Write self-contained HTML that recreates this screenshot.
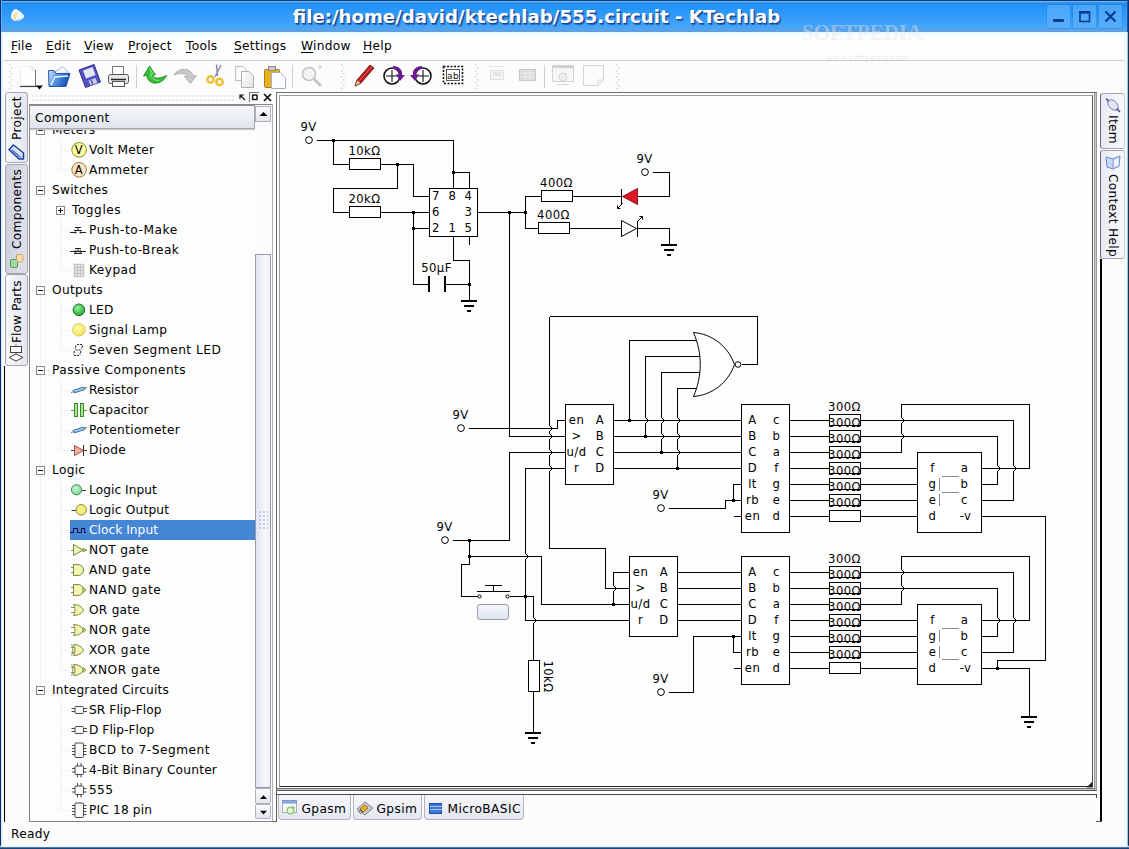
<!DOCTYPE html><html><head><meta charset="utf-8"><title>KTechlab</title><style>
html,body{margin:0;padding:0}
body{width:1129px;height:849px;overflow:hidden;position:relative;background:#fcfcfc;font-family:"DejaVu Sans","Liberation Sans",sans-serif;font-size:12.2px;letter-spacing:0.3px;color:#000}
div,span{position:absolute;box-sizing:border-box;white-space:nowrap}
#title{left:0;top:0;width:1129px;height:32px;background:linear-gradient(#0a3a78 0,#0a3a78 0.9px,#6cb4f8 1.4px,#4a98ea 2.3px,#2888e8 3.2px,#2092f8 5.5px,#2c98f8 12px,#369cfa 18px,#3ea4fc 25px,#52a4ee 29px,#5aa2e6 31px,#6a9cd0 32px)}
#ttext{left:0;width:1073px;letter-spacing:0;top:6px;text-align:center;color:#fff;font-weight:bold;font-size:18.15px;line-height:22px;text-shadow:1px 1px 0 #1c428e,1.5px 2px 1px rgba(20,50,120,.55)}
.wb{top:5px;width:23px;height:23px;background:linear-gradient(#4aa6fa,#58aefc);border-radius:2px;box-shadow:0 0 0 1px rgba(40,120,220,.35)}
#menubar{left:1px;top:32px;width:1127px;height:28px;background:linear-gradient(#e2fbff 0,#f4feff 3px,#fdfefe 7px,#fdfdfd 28px)}
#menubar span{top:6px;line-height:16px;font-size:12.2px;letter-spacing:0.3px}
#menubar u{text-decoration:underline;text-underline-offset:2px}
#mline{left:2px;top:60px;width:1125px;height:1px;background:#d0d0d0}
#bl{left:0;top:32px;width:4px;height:817px;background:linear-gradient(90deg,#0e2c66 0,#0e2c66 0.9px,#d4e8fa 1.3px,#eaf4fd 2px,rgba(240,248,254,0) 4px)}
#br{left:1122px;top:32px;width:7px;height:817px;background:linear-gradient(90deg,rgba(232,250,255,0) 0,#e6fbff 4.5px,#e0f6fc 5.3px,#16304e 6.1px,#16304e 7px)}
#br2{left:1127px;top:0;width:2px;height:32px;background:linear-gradient(90deg,#2a7ad8,#0e3476 1px)}
#bl2{left:0;top:0;width:2px;height:32px;background:linear-gradient(90deg,#0a2e6c 0,#0a2e6c 1px,#62b0fa 1px,#62b0fa 2px)}
#bb{left:0;top:845px;width:1129px;height:4px;background:linear-gradient(rgba(240,248,255,0) 0,#e4f2fc 2px,#1c4a84 2.7px,#163e78 4px)}
.vtab{border:1px solid #a4a4ac;border-radius:3px;background:linear-gradient(90deg,#f6f7fa,#e4e7f0)}
.vtxt{font-size:12.2px;letter-spacing:0.3px;line-height:16px;transform-origin:0 0}
.btab{top:795px;height:25px;border:1px solid #b4b4bc;border-top:none;border-radius:0 0 4px 4px;background:linear-gradient(#f6f7fb,#e4e7f0)}
.btab span{top:5.5px;line-height:16px;font-size:12.2px;letter-spacing:0.4px}
</style></head><body>
<div id="title"><div id="ttext">file:/home/david/ktechlab/555.circuit - KTechlab</div>
<svg style="position:absolute;left:9px;top:7px" width="18" height="16" viewBox="9 7 18 16"><path d="M11 17.500C10.500 14 13 9.500 15.500 9C18 9.500 23 13.500 24 16C24.500 18 21 20 17 20.500C14 21 11.500 20 11 17.500Z" fill="#eef4fb"/><path d="M13.500 19.500L15 12.500M15 20L16.500 13" stroke="#f0dc70" stroke-width="1.100" fill="none"/><path d="M16 10C19 11.500 22 14 23.500 16" stroke="#ffffff" stroke-width="1.200" fill="none"/><path d="M13 20.500C16 21.500 21 20.500 23.500 18" stroke="#b8c8e0" stroke-width="0.800" fill="none"/></svg>
<div class="wb" style="left:1047px"><svg style="position:absolute;left:0;top:0" width="23" height="23"><rect x="6" y="14" width="11" height="3" rx="1" fill="#0b3c8e"/></svg></div>
<div class="wb" style="left:1073px"><svg style="position:absolute;left:0;top:0" width="23" height="23"><rect x="7" y="7.5" width="9.5" height="9" fill="none" stroke="#0b3c8e" stroke-width="1.6"/><rect x="6.2" y="6" width="11.1" height="2.4" fill="#0b3c8e"/></svg></div>
<div class="wb" style="left:1099px"><svg style="position:absolute;left:0;top:0" width="23" height="23"><path d="M6.5 6.5L16.5 16.5M16.5 6.5L6.5 16.5" stroke="#0b3c8e" stroke-width="2.2" fill="none"/></svg></div>
</div>
<div id="menubar">
<span style="left:10px"><u>F</u>ile</span>
<span style="left:45px"><u>E</u>dit</span>
<span style="left:83px"><u>V</u>iew</span>
<span style="left:127px"><u>P</u>roject</span>
<span style="left:185px"><u>T</u>ools</span>
<span style="left:233px"><u>S</u>ettings</span>
<span style="left:300px"><u>W</u>indow</span>
<span style="left:362px"><u>H</u>elp</span>
</div><div id="mline"></div>
<div style="left:802px;top:20px;font-family:'Liberation Serif',serif;font-weight:bold;font-size:21px;letter-spacing:0;line-height:24px;color:rgba(255,255,255,.36);text-shadow:0 1px 1px rgba(150,90,90,.10)">SOFTPEDIA</div>
<div style="left:826px;top:53px;font-size:8.500px;letter-spacing:0;line-height:10px;color:rgba(0,0,0,.10)">www.softpedia.com</div>
<svg style="position:absolute;left:0;top:61px" width="1129" height="31" viewBox="0 61 1129 31">
<defs><linearGradient id="gpage" x1="0" y1="0" x2="1" y2="1"><stop offset="0" stop-color="#ffffff"/><stop offset="1" stop-color="#e4e4e4"/></linearGradient></defs>
<rect x="9" y="64" width="1.5" height="1.5" fill="#d4d4d8"/><rect x="11" y="67" width="1.5" height="1.5" fill="#d4d4d8"/><rect x="9" y="70" width="1.5" height="1.5" fill="#d4d4d8"/><rect x="11" y="73" width="1.5" height="1.5" fill="#d4d4d8"/><rect x="9" y="76" width="1.5" height="1.5" fill="#d4d4d8"/><rect x="11" y="79" width="1.5" height="1.5" fill="#d4d4d8"/><rect x="9" y="82" width="1.5" height="1.5" fill="#d4d4d8"/><rect x="11" y="85" width="1.5" height="1.5" fill="#d4d4d8"/><rect x="9" y="88" width="1.5" height="1.5" fill="#d4d4d8"/>
<rect x="341" y="64" width="1.5" height="1.5" fill="#d4d4d8"/><rect x="343" y="67" width="1.5" height="1.5" fill="#d4d4d8"/><rect x="341" y="70" width="1.5" height="1.5" fill="#d4d4d8"/><rect x="343" y="73" width="1.5" height="1.5" fill="#d4d4d8"/><rect x="341" y="76" width="1.5" height="1.5" fill="#d4d4d8"/><rect x="343" y="79" width="1.5" height="1.5" fill="#d4d4d8"/><rect x="341" y="82" width="1.5" height="1.5" fill="#d4d4d8"/><rect x="343" y="85" width="1.5" height="1.5" fill="#d4d4d8"/><rect x="341" y="88" width="1.5" height="1.5" fill="#d4d4d8"/>
<rect x="475" y="64" width="1.5" height="1.5" fill="#d4d4d8"/><rect x="477" y="67" width="1.5" height="1.5" fill="#d4d4d8"/><rect x="475" y="70" width="1.5" height="1.5" fill="#d4d4d8"/><rect x="477" y="73" width="1.5" height="1.5" fill="#d4d4d8"/><rect x="475" y="76" width="1.5" height="1.5" fill="#d4d4d8"/><rect x="477" y="79" width="1.5" height="1.5" fill="#d4d4d8"/><rect x="475" y="82" width="1.5" height="1.5" fill="#d4d4d8"/><rect x="477" y="85" width="1.5" height="1.5" fill="#d4d4d8"/><rect x="475" y="88" width="1.5" height="1.5" fill="#d4d4d8"/>
<rect x="616" y="64" width="1.5" height="1.5" fill="#d4d4d8"/><rect x="618" y="67" width="1.5" height="1.5" fill="#d4d4d8"/><rect x="616" y="70" width="1.5" height="1.5" fill="#d4d4d8"/><rect x="618" y="73" width="1.5" height="1.5" fill="#d4d4d8"/><rect x="616" y="76" width="1.5" height="1.5" fill="#d4d4d8"/><rect x="618" y="79" width="1.5" height="1.5" fill="#d4d4d8"/><rect x="616" y="82" width="1.5" height="1.5" fill="#d4d4d8"/><rect x="618" y="85" width="1.5" height="1.5" fill="#d4d4d8"/><rect x="616" y="88" width="1.5" height="1.5" fill="#d4d4d8"/>
<path d="M136.5 65V88" stroke="#d0d0d0"/>
<path d="M292.5 65V88" stroke="#d0d0d0"/>
<path d="M544.5 65V88" stroke="#d0d0d0"/>
<path d="M20.5 66.5H32L35.5 70V85.5H20.5Z" fill="#fefefe" stroke="#ececec"/><path d="M32 66.5V70H35.5" fill="none" stroke="#dcdcdc"/><path d="M35.5 70V86" stroke="#777"/><path d="M20 86.5H37" stroke="#444" stroke-width="1.2"/><path d="M36 85.5L43 85.5L39.5 89.5Z" fill="#000"/>
<defs><linearGradient id="gfold" x1="0" y1="0" x2="1" y2="0.3"><stop offset="0" stop-color="#d8e8fa"/><stop offset="0.45" stop-color="#5a98e4"/><stop offset="1" stop-color="#1450b8"/></linearGradient></defs><path d="M52 74L63 66.5L69 73Z" fill="#f4f8fc" stroke="#a8b8d0"/><path d="M48.5 70.5L49 86.5L66 86.5L70 73.5L56 73.5L54 70.5Z" fill="url(#gfold)" stroke="#2458a8"/><path d="M51 85L55 77L68 76" stroke="#eaf2fc" fill="none" stroke-width="1.4"/>
<path d="M79 70L94 64.5L100.5 82L85.5 87.5Z" fill="#5252c0" stroke="#30308a"/><path d="M83 70.5L92.5 67L95.5 75L86 78.5Z" fill="#e4e8f6"/><path d="M88.5 80.5L95.5 78L97.5 83L90.5 85.5Z" fill="#c4c8e4"/><path d="M91 80L93 85" stroke="#5252c0" stroke-width="1.5"/>
<rect x="112.5" y="66.5" width="11" height="8" fill="#fff" stroke="#777"/><rect x="108.500" y="74.5" width="20" height="9" rx="2" fill="#e8e8e8" stroke="#555"/><rect x="112.500" y="81.5" width="12" height="5" fill="#fff" stroke="#555"/><path d="M111 79.500H126" stroke="#222" stroke-width="1.5"/>
<path d="M149.5 66L155.5 75L152.5 75C153 78 157 80 166.5 75.5C164 82 156 85 151 82C148 80.5 147 78 147 75.5L143.5 76Z" fill="#34c034" stroke="#1a7a1a" stroke-width="0.8"/><path d="M149.5 68.5L153 74L150.5 74C151 78 154 80.5 159 80.5" fill="none" stroke="#8af08a" stroke-width="1"/>
<path d="M190.5 83.5L184.5 76.5L187.5 76.5C186 73.5 181 72.5 174 75C177 69.5 185 68 189 70.5C191.5 72 192.5 74 193 76L196.5 75.5Z" fill="#c8c8c8" stroke="#a4a4a4" stroke-width="0.8"/>
<path d="M216.5 64.5L217.5 76M221 65L215 77" stroke="#8a8ab0" stroke-width="1.5" fill="none"/><circle cx="210.5" cy="79.5" r="3.2" fill="none" stroke="#ecc030" stroke-width="2.4"/><circle cx="219.5" cy="82" r="3.2" fill="none" stroke="#ecc030" stroke-width="2.4"/>
<path d="M235.500 66.500H243L246.500 70V80.500H235.500Z" fill="#fafafa" stroke="#c0c0c0"/><path d="M241.500 71.500H249L253.500 76V87.500H241.500Z" fill="url(#gpage)" stroke="#b0b0b0"/>
<rect x="264.500" y="69.500" width="15" height="18" rx="1" fill="#e8b020" stroke="#b08010"/><rect x="268.500" y="66.500" width="7" height="4" fill="#c8c8c8" stroke="#888"/><path d="M271.500 72.500H280L285.500 78V88.500H271.500Z" fill="#fafcff" stroke="#a8b0c0"/>
<circle cx="309" cy="74" r="6.500" fill="#f4f4f4" stroke="#c4c4c4" stroke-width="1.6"/><path d="M314 79L321 86" stroke="#c4c4c4" stroke-width="3"/><path d="M318 67H322M320 65V69" stroke="#d0d0d0"/>
<path d="M355 86L357 80L370 65L374 68L361 83Z" fill="#b81c1c" stroke="#6a0c0c" stroke-width="0.8"/><path d="M355 86L357 80L361 83Z" fill="#f0d0a0" stroke="#7a1010" stroke-width="0.6"/><path d="M359 81L372 66.500" stroke="#f06060"/>
<circle cx="392" cy="76" r="8" fill="#fff" stroke="#111" stroke-width="1.6"/><path d="M392 70V82M386 76H398" stroke="#111" stroke-width="1.1"/><path d="M393 66C399 66 403 70 402 75L405 75L400 81L396 74L399 74.500C399 71 396 69 393 69Z" fill="#6a1a8a"/>
<circle cx="423" cy="76" r="8" fill="#fff" stroke="#111" stroke-width="1.6"/><path d="M423 70V82M417 76H429" stroke="#111" stroke-width="1.1"/><path d="M422 66C416 66 412 70 413 75L410 75L415 81L419 74L416 74.500C416 71 419 69 422 69Z" fill="#6a1a8a"/>
<rect x="443.500" y="66.500" width="19" height="17" fill="#fff" stroke="#111" stroke-dasharray="2 1.5" stroke-width="1.6"/><rect x="446.500" y="69.500" width="13" height="11" fill="#fff" stroke="#333" stroke-width="0.8"/><text x="453" y="79" font-size="9" text-anchor="middle" font-family="DejaVu Sans,Liberation Sans,sans-serif" fill="#111">ab</text>
<rect x="490.500" y="70.500" width="13" height="9" fill="#f4f4f4" stroke="#e0e0e0"/><path d="M489 66.500H505" stroke="#e4e4e4"/><rect x="493" y="72" width="8" height="4" fill="#e6e6e6"/>
<rect x="519.500" y="69.500" width="16" height="11" fill="#dcdcdc" stroke="#c8c8c8"/><path d="M520 73H535M520 77H535M525 70V80M530 70V80" stroke="#eee"/>
<rect x="552.500" y="65.500" width="21" height="16" fill="#f6f6f6" stroke="#d4d4d4"/><path d="M553 67H573" stroke="#d0d0d0" stroke-width="2"/><circle cx="563" cy="77" r="4" fill="#ececec" stroke="#d8d8d8"/><path d="M557 84.500H569" stroke="#d8d8d8"/>
<path d="M583.500 65.500H603.500V80L598 85.500H583.500Z" fill="#fbfbfb" stroke="#d4d4d4"/><path d="M603.500 80H598V85.500" fill="none" stroke="#d8d8d8"/>
</svg>
<div class="vtab" style="left:5px;top:92px;width:23px;height:71px;"></div>
<div class="vtxt" style="left:8.5px;top:140px;letter-spacing:0.3px;transform:rotate(-90deg)">Project</div>
<div class="vtab" style="left:5px;top:164px;width:23px;height:110px;background:linear-gradient(90deg,#cdd1de,#dfe2ec);"></div>
<div class="vtxt" style="left:8.5px;top:249px;letter-spacing:0.3px;transform:rotate(-90deg)">Components</div>
<div class="vtab" style="left:5px;top:274px;width:23px;height:92px;"></div>
<div class="vtxt" style="left:8.5px;top:342.5px;letter-spacing:0.05px;transform:rotate(-90deg)">Flow Parts</div>
<svg style="position:absolute;left:6px;top:142px" width="20" height="20" viewBox="0 0 20 20"><path d="M3 7.500L7.500 3L17.500 11V17H13Z" fill="#cfdcf6" stroke="#1c3c9c" stroke-width="1.5" stroke-linejoin="round"/><path d="M6 8L14.500 15.500" stroke="#4a6ac8" stroke-width="1.2" fill="none"/><path d="M8.500 5.500L16 12" stroke="#ffffff" stroke-width="1" fill="none"/></svg>
<svg style="position:absolute;left:7px;top:251px" width="20" height="20" viewBox="0 0 20 20"><rect x="3.500" y="8.500" width="7" height="8" rx="1.500" fill="#a0dca0" stroke="#5a9a5a"/><rect x="9.500" y="3.500" width="6.500" height="7.500" rx="1.500" fill="#f6dcae" stroke="#c8a464"/></svg>
<svg style="position:absolute;left:6px;top:344px" width="20" height="19" viewBox="0 0 20 19"><path d="M10 0.500V2.500M10 8.500V10" stroke="#555"/><rect x="4.500" y="2.500" width="11" height="6" fill="#fff" stroke="#444"/><path d="M10 10L17 13.500L10 17L3 13.500Z" fill="#fff" stroke="#444"/></svg>
<div style="left:30px;top:93px;width:243px;height:10px;background-image:radial-gradient(circle,#e2e2e6 0.8px,transparent 1.1px);background-size:4px 4px;background-position:1px 1px;opacity:.8"></div>
<div style="left:234px;top:92px;width:40px;height:11px;background:#fcfcfc"></div>
<svg style="position:absolute;left:234px;top:90px" width="40" height="14" viewBox="0 0 40 14"><path d="M6 5L11 10M6 9V5H10" stroke="#111" stroke-width="1.2" fill="none"/><path d="M15.5 12V2.5H25" stroke="#777" fill="none"/><rect x="18.6" y="5.1" width="4.4" height="4.4" fill="none" stroke="#111" stroke-width="1.4"/><path d="M30 4L37 11M37 4L30 11" stroke="#111" stroke-width="1.7" fill="none"/></svg>
<div style="left:29px;top:104px;width:244px;height:718px;border:1px solid #858585;border-right-color:#b0b0b0;background:#fdfdfd"></div>
<div style="left:31px;top:105px;width:224px;height:716px;overflow:hidden">
<div style="left:39px;top:415px;width:185px;height:20px;background:#4585d5"></div>
<svg style="position:absolute;left:0;top:0" width="224" height="716" viewBox="31 104 224 716">
<g stroke="#f0f0f0" stroke-width="1" fill="none" shape-rendering="crispEdges">
<path d="M40.5 130V689"/>
<path d="M60.5 137V169"/>
<path d="M60.5 149.5H69"/>
<path d="M60.5 169.5H69"/>
<path d="M46 129.5H51"/>
<path d="M60.5 197V269"/>
<path d="M60.5 209.5H69"/>
<path d="M60.5 229.5H69"/>
<path d="M60.5 249.5H69"/>
<path d="M60.5 269.5H69"/>
<path d="M46 189.5H51"/>
<path d="M60.5 297V349"/>
<path d="M60.5 309.5H69"/>
<path d="M60.5 329.5H69"/>
<path d="M60.5 349.5H69"/>
<path d="M46 289.5H51"/>
<path d="M60.5 377V449"/>
<path d="M60.5 389.5H69"/>
<path d="M60.5 409.5H69"/>
<path d="M60.5 429.5H69"/>
<path d="M60.5 449.5H69"/>
<path d="M46 369.5H51"/>
<path d="M60.5 477V669"/>
<path d="M60.5 489.5H69"/>
<path d="M60.5 509.5H69"/>
<path d="M60.5 529.5H69"/>
<path d="M60.5 549.5H69"/>
<path d="M60.5 569.5H69"/>
<path d="M60.5 589.5H69"/>
<path d="M60.5 609.5H69"/>
<path d="M60.5 629.5H69"/>
<path d="M60.5 649.5H69"/>
<path d="M60.5 669.5H69"/>
<path d="M46 469.5H51"/>
<path d="M60.5 697V809"/>
<path d="M60.5 709.5H69"/>
<path d="M60.5 729.5H69"/>
<path d="M60.5 749.5H69"/>
<path d="M60.5 769.5H69"/>
<path d="M60.5 789.5H69"/>
<path d="M60.5 809.5H69"/>
<path d="M46 689.5H51"/>
</g>
<rect x="36.5" y="125.5" width="8" height="8" fill="#fff" stroke="#8a8a8a" shape-rendering="crispEdges"/>
<path d="M38 129.5H43" stroke="#111" shape-rendering="crispEdges"/>
<rect x="36.5" y="185.5" width="8" height="8" fill="#fff" stroke="#8a8a8a" shape-rendering="crispEdges"/>
<path d="M38 189.5H43" stroke="#111" shape-rendering="crispEdges"/>
<rect x="56.5" y="205.5" width="8" height="8" fill="#fff" stroke="#8a8a8a" shape-rendering="crispEdges"/>
<path d="M58 209.5H63M60.5 207V212" stroke="#111" shape-rendering="crispEdges"/>
<rect x="36.5" y="285.5" width="8" height="8" fill="#fff" stroke="#8a8a8a" shape-rendering="crispEdges"/>
<path d="M38 289.5H43" stroke="#111" shape-rendering="crispEdges"/>
<rect x="36.5" y="365.5" width="8" height="8" fill="#fff" stroke="#8a8a8a" shape-rendering="crispEdges"/>
<path d="M38 369.5H43" stroke="#111" shape-rendering="crispEdges"/>
<rect x="36.5" y="465.5" width="8" height="8" fill="#fff" stroke="#8a8a8a" shape-rendering="crispEdges"/>
<path d="M38 469.5H43" stroke="#111" shape-rendering="crispEdges"/>
<rect x="36.5" y="685.5" width="8" height="8" fill="#fff" stroke="#8a8a8a" shape-rendering="crispEdges"/>
<path d="M38 689.5H43" stroke="#111" shape-rendering="crispEdges"/>
</svg>
<span style="left:21px;top:17px;line-height:16px;font-size:12.2px;letter-spacing:0.3px;color:#000">Meters</span>
<span style="left:58px;top:37px;line-height:16px;font-size:12.2px;letter-spacing:0.31px;color:#000">Volt Meter</span>
<svg style="position:absolute;left:39px;top:37px;overflow:visible" width="17" height="16" viewBox="0 0 17 16"><circle cx="9.1" cy="7.8" r="7.3" fill="#fefea4" stroke="#8a8a20" stroke-width="1"/><text x="8.8" y="12" font-size="11.5" text-anchor="middle" fill="#000" font-family="DejaVu Sans,Liberation Sans,sans-serif">V</text></svg>
<span style="left:58px;top:57px;line-height:16px;font-size:12.2px;letter-spacing:0.46px;color:#000">Ammeter</span>
<svg style="position:absolute;left:39px;top:57px;overflow:visible" width="17" height="16" viewBox="0 0 17 16"><circle cx="9.1" cy="7.8" r="7.3" fill="#fde6c4" stroke="#a07838" stroke-width="1"/><text x="8.8" y="12" font-size="11.5" text-anchor="middle" fill="#000" font-family="DejaVu Sans,Liberation Sans,sans-serif">A</text></svg>
<span style="left:21px;top:77px;line-height:16px;font-size:12.2px;letter-spacing:0.26px;color:#000">Switches</span>
<span style="left:41px;top:97px;line-height:16px;font-size:12.2px;letter-spacing:0.52px;color:#000">Toggles</span>
<span style="left:58px;top:117px;line-height:16px;font-size:12.2px;letter-spacing:0.53px;color:#000">Push-to-Make</span>
<svg style="position:absolute;left:39px;top:117px;overflow:visible" width="17" height="16" viewBox="0 0 17 16"><path d="M0 10.5H5M11 10.5H16M4 8.5H12M8 5.5V8.5M5 5.5H11" stroke="#222" fill="none"/><circle cx="5.5" cy="10.5" r="1" fill="#222"/><circle cx="10.5" cy="10.5" r="1" fill="#222"/></svg>
<span style="left:58px;top:137px;line-height:16px;font-size:12.2px;letter-spacing:0.42px;color:#000">Push-to-Break</span>
<svg style="position:absolute;left:39px;top:137px;overflow:visible" width="17" height="16" viewBox="0 0 17 16"><path d="M0 9.5H16M4 11.5H12M8 6.5V9M5 6.5H11" stroke="#222" fill="none"/><circle cx="5.5" cy="9.5" r="1.2" fill="#222"/><circle cx="10.5" cy="9.5" r="1.2" fill="#222"/></svg>
<span style="left:58px;top:157px;line-height:16px;font-size:12.2px;letter-spacing:0.44px;color:#000">Keypad</span>
<svg style="position:absolute;left:39px;top:157px;overflow:visible" width="17" height="16" viewBox="0 0 17 16"><path d="M4 2.5H13M4 5.5H13M4 8.5H13M4 11.5H13M4 14.5H13M4.5 2V15M7.5 2V15M10.5 2V15M13.5 2V15" stroke="#c4c4c4" stroke-width="1.6" fill="none"/></svg>
<span style="left:21px;top:177px;line-height:16px;font-size:12.2px;letter-spacing:0.31px;color:#000">Outputs</span>
<span style="left:58px;top:197px;line-height:16px;font-size:12.2px;letter-spacing:0.25px;color:#000">LED</span>
<svg style="position:absolute;left:39px;top:197px;overflow:visible" width="17" height="16" viewBox="0 0 17 16"><defs><radialGradient id="gled" cx="0.4" cy="0.35" r="0.7"><stop offset="0" stop-color="#90f090"/><stop offset="1" stop-color="#20a838"/></radialGradient></defs><circle cx="8.9" cy="7.8" r="5.8" fill="url(#gled)" stroke="#1c6a28"/></svg>
<span style="left:58px;top:217px;line-height:16px;font-size:12.2px;letter-spacing:0.28px;color:#000">Signal Lamp</span>
<svg style="position:absolute;left:39px;top:217px;overflow:visible" width="17" height="16" viewBox="0 0 17 16"><defs><radialGradient id="glamp" cx="0.4" cy="0.35" r="0.7"><stop offset="0" stop-color="#fffbb0"/><stop offset="1" stop-color="#f4e050"/></radialGradient></defs><circle cx="8.9" cy="7.8" r="6.3" fill="url(#glamp)" stroke="#dccc6a"/></svg>
<span style="left:58px;top:237px;line-height:16px;font-size:12.2px;letter-spacing:0.48px;color:#000">Seven Segment LED</span>
<svg style="position:absolute;left:39px;top:237px;overflow:visible" width="17" height="16" viewBox="0 0 17 16"><path d="M7 2.5H12M6 3.5L5 7M12.5 3.5L11.5 7M5.5 8H10.5M4.5 9L3.5 12.5M11 9L10 12.5M4 13.5H9" stroke="#333" stroke-width="1.1" fill="none" stroke-dasharray="2.2 0.8"/></svg>
<span style="left:21px;top:257px;line-height:16px;font-size:12.2px;letter-spacing:0.45px;color:#000">Passive Components</span>
<span style="left:58px;top:277px;line-height:16px;font-size:12.2px;letter-spacing:0.11px;color:#000">Resistor</span>
<svg style="position:absolute;left:40px;top:277px;overflow:visible" width="17" height="16" viewBox="0 0 17 16"><path d="M0 10.5L3 9.5M13 6.5L16 5.5" stroke="#4a6a9a" fill="none"/><path d="M2.5 8.2L13 5L13.8 7.6L3.3 10.9Z" fill="#98c8ee" stroke="#386488" stroke-width="0.9"/></svg>
<span style="left:58px;top:297px;line-height:16px;font-size:12.2px;letter-spacing:0.14px;color:#000">Capacitor</span>
<svg style="position:absolute;left:40px;top:297px;overflow:visible" width="17" height="16" viewBox="0 0 17 16"><path d="M0 8.5H4M12 8.5H16" stroke="#5a9a4a"/><rect x="3.5" y="1.5" width="3" height="13" fill="#a8e890" stroke="#3a8a2a"/><rect x="9.5" y="1.5" width="3" height="13" fill="#a8e890" stroke="#3a8a2a"/></svg>
<span style="left:58px;top:317px;line-height:16px;font-size:12.2px;letter-spacing:0.34px;color:#000">Potentiometer</span>
<svg style="position:absolute;left:40px;top:317px;overflow:visible" width="17" height="16" viewBox="0 0 17 16"><path d="M0 10.5L3 9.5M13 6.5L16 5.5" stroke="#4a6a9a" fill="none"/><path d="M2.5 8.2L13 5L13.8 7.6L3.3 10.9Z" fill="#98c8ee" stroke="#386488" stroke-width="0.9"/></svg>
<span style="left:58px;top:337px;line-height:16px;font-size:12.2px;letter-spacing:0.31px;color:#000">Diode</span>
<svg style="position:absolute;left:40px;top:337px;overflow:visible" width="17" height="16" viewBox="0 0 17 16"><path d="M0 8.5H16" stroke="#444"/><path d="M3.5 3.5L12.5 8.5L3.5 13.5Z" fill="#f4b0a0" stroke="#a85040"/><path d="M12.5 3V14" stroke="#333"/></svg>
<span style="left:21px;top:357px;line-height:16px;font-size:12.2px;letter-spacing:0.3px;color:#000">Logic</span>
<span style="left:58px;top:377px;line-height:16px;font-size:12.2px;letter-spacing:0.06px;color:#000">Logic Input</span>
<svg style="position:absolute;left:39px;top:377px;overflow:visible" width="17" height="16" viewBox="0 0 17 16"><path d="M11.500 8.500H16" stroke="#333"/><defs><radialGradient id="gli" cx="0.4" cy="0.35" r="0.7"><stop offset="0" stop-color="#c8f4d0"/><stop offset="1" stop-color="#78d890"/></radialGradient></defs><circle cx="6.500" cy="7.800" r="5.100" fill="url(#gli)" stroke="#3a8a4a"/></svg>
<span style="left:58px;top:397px;line-height:16px;font-size:12.2px;letter-spacing:0.18px;color:#000">Logic Output</span>
<svg style="position:absolute;left:39px;top:397px;overflow:visible" width="17" height="16" viewBox="0 0 17 16"><path d="M1.500 8.500H6" stroke="#333"/><circle cx="11.200" cy="7.800" r="5.200" fill="#f4f080" stroke="#8a8a28"/></svg>
<span style="left:58px;top:417px;line-height:16px;font-size:12.2px;letter-spacing:0.04px;color:#fff">Clock Input</span>
<svg style="position:absolute;left:39px;top:417px;overflow:visible" width="17" height="16" viewBox="0 0 17 16"><path d="M0 10.5H3.5V6.5H7.5V10.5H11.5V6.5H14.5V10.5H16" stroke="#101048" stroke-width="1.3" fill="none" shape-rendering="crispEdges"/></svg>
<span style="left:58px;top:437px;line-height:16px;font-size:12.2px;letter-spacing:0.31px;color:#000">NOT gate</span>
<svg style="position:absolute;left:40px;top:437px;overflow:visible" width="17" height="16" viewBox="0 0 17 16"><path d="M0 8.5H3M13 8.5H16" stroke="#8a8a6a"/><path d="M2.5 2.5L12 8L2.5 13.5Z" fill="#e8f4b8" stroke="#7a8a3a"/><path d="M12 6L15.5 8L12 10Z" fill="#c8d870" stroke="#7a8a3a" stroke-width="0.8"/></svg>
<span style="left:58px;top:457px;line-height:16px;font-size:12.2px;letter-spacing:0.49px;color:#000">AND gate</span>
<svg style="position:absolute;left:39px;top:457px;overflow:visible" width="17" height="16" viewBox="0 0 17 16"><path d="M1 5.5H4M1 10.5H4" stroke="#8a8a6a" stroke-width="1" fill="none"/><path d="M3.5 2.5H8A5.5 5.5 0 0 1 8 13.5H3.5Z" fill="#f2f4b0" stroke="#7a8a3a"/></svg>
<span style="left:58px;top:477px;line-height:16px;font-size:12.2px;letter-spacing:0.57px;color:#000">NAND gate</span>
<svg style="position:absolute;left:39px;top:477px;overflow:visible" width="17" height="16" viewBox="0 0 17 16"><path d="M1 5.5H4M1 10.5H4" stroke="#8a8a6a" stroke-width="1" fill="none"/><path d="M3.5 2.5H8A5.5 5.5 0 0 1 8 13.5H3.5Z" fill="#f2f4b0" stroke="#7a8a3a"/><path d="M13 5.5L16 8L13 10.5Z" fill="#c8d870" stroke="#7a8a3a" stroke-width="0.8"/></svg>
<span style="left:58px;top:497px;line-height:16px;font-size:12.2px;letter-spacing:0.23px;color:#000">OR gate</span>
<svg style="position:absolute;left:39px;top:497px;overflow:visible" width="17" height="16" viewBox="0 0 17 16"><path d="M1 5.5H4M1 10.5H4" stroke="#8a8a6a" stroke-width="1" fill="none"/><path d="M3.5 2.5C9 2.5 12 5 13.5 8C12 11 9 13.5 3.5 13.5C5.5 10 5.5 6 3.5 2.5Z" fill="#f2f4b0" stroke="#7a8a3a"/></svg>
<span style="left:58px;top:517px;line-height:16px;font-size:12.2px;letter-spacing:0.37px;color:#000">NOR gate</span>
<svg style="position:absolute;left:39px;top:517px;overflow:visible" width="17" height="16" viewBox="0 0 17 16"><path d="M1 5.5H4M1 10.5H4" stroke="#8a8a6a" stroke-width="1" fill="none"/><path d="M3.5 2.5C9 2.5 12 5 13.5 8C12 11 9 13.5 3.5 13.5C5.5 10 5.5 6 3.5 2.5Z" fill="#f2f4b0" stroke="#7a8a3a"/><path d="M13 5.5L16 8L13 10.5Z" fill="#c8d870" stroke="#7a8a3a" stroke-width="0.8"/></svg>
<span style="left:58px;top:537px;line-height:16px;font-size:12.2px;letter-spacing:0.59px;color:#000">XOR gate</span>
<svg style="position:absolute;left:39px;top:537px;overflow:visible" width="17" height="16" viewBox="0 0 17 16"><path d="M1 5.5H4M1 10.5H4" stroke="#8a8a6a" stroke-width="1" fill="none"/><path d="M3.5 2.5C9 2.5 12 5 13.5 8C12 11 9 13.5 3.5 13.5C5.5 10 5.5 6 3.5 2.5Z" fill="#f2f4b0" stroke="#7a8a3a"/><path d="M1.5 2.5C3.5 6 3.5 10 1.5 13.5" fill="none" stroke="#7a8a3a"/></svg>
<span style="left:58px;top:557px;line-height:16px;font-size:12.2px;letter-spacing:0.53px;color:#000">XNOR gate</span>
<svg style="position:absolute;left:39px;top:557px;overflow:visible" width="17" height="16" viewBox="0 0 17 16"><path d="M1 5.5H4M1 10.5H4" stroke="#8a8a6a" stroke-width="1" fill="none"/><path d="M3.5 2.5C9 2.5 12 5 13.5 8C12 11 9 13.5 3.5 13.5C5.5 10 5.5 6 3.5 2.5Z" fill="#f2f4b0" stroke="#7a8a3a"/><path d="M1.5 2.5C3.5 6 3.5 10 1.5 13.5" fill="none" stroke="#7a8a3a"/><path d="M13 5.5L16 8L13 10.5Z" fill="#c8d870" stroke="#7a8a3a" stroke-width="0.8"/></svg>
<span style="left:21px;top:577px;line-height:16px;font-size:12.2px;letter-spacing:0.2px;color:#000">Integrated Circuits</span>
<span style="left:58px;top:597px;line-height:16px;font-size:12.2px;letter-spacing:0.08px;color:#000">SR Flip-Flop</span>
<svg style="position:absolute;left:39px;top:597px;overflow:visible" width="17" height="16" viewBox="0 0 17 16"><rect x="5" y="4.500" width="8.500" height="7" rx="1" fill="#fafafa" stroke="#4a4a4a"/><path d="M1.500 6.500H5M1.500 9.500H5M13.500 6.500H17M13.500 9.500H17" stroke="#4a4a4a"/></svg>
<span style="left:58px;top:617px;line-height:16px;font-size:12.2px;letter-spacing:0.04px;color:#000">D Flip-Flop</span>
<svg style="position:absolute;left:39px;top:617px;overflow:visible" width="17" height="16" viewBox="0 0 17 16"><rect x="5" y="4.500" width="8.500" height="7" rx="1" fill="#fafafa" stroke="#4a4a4a"/><path d="M1.500 6.500H5M1.500 9.500H5M13.500 6.500H17M13.500 9.500H17" stroke="#4a4a4a"/></svg>
<span style="left:58px;top:637px;line-height:16px;font-size:12.2px;letter-spacing:0.5px;color:#000">BCD to 7-Segment</span>
<svg style="position:absolute;left:39px;top:637px;overflow:visible" width="17" height="16" viewBox="0 0 17 16"><rect x="5" y="1" width="8.500" height="14.500" rx="1" fill="#fafafa" stroke="#4a4a4a"/><path d="M2 3.500H5M2 6.500H5M2 9.500H5M2 12.500H5M13.500 3.500H16.500M13.500 6.500H16.500M13.500 9.500H16.500M13.500 12.500H16.500" stroke="#4a4a4a"/></svg>
<span style="left:58px;top:657px;line-height:16px;font-size:12.2px;letter-spacing:0.21px;color:#000">4-Bit Binary Counter</span>
<svg style="position:absolute;left:39px;top:657px;overflow:visible" width="17" height="16" viewBox="0 0 17 16"><rect x="5" y="4" width="8.500" height="8.500" rx="1" fill="#fafafa" stroke="#4a4a4a"/><path d="M2 6.500H5M2 10H5M13.500 6.500H16.500M13.500 10H16.500M7.500 1V4M11 1V4M7.500 12.500V15.500M11 12.500V15.500" stroke="#4a4a4a"/></svg>
<span style="left:58px;top:677px;line-height:16px;font-size:12.2px;letter-spacing:0.35px;color:#000">555</span>
<svg style="position:absolute;left:39px;top:677px;overflow:visible" width="17" height="16" viewBox="0 0 17 16"><rect x="5" y="4" width="8.500" height="8.500" rx="1" fill="#fafafa" stroke="#4a4a4a"/><path d="M2 6.500H5M2 10H5M13.500 6.500H16.500M13.500 10H16.500M7.500 1V4M11 1V4M7.500 12.500V15.500M11 12.500V15.500" stroke="#4a4a4a"/></svg>
<span style="left:58px;top:697px;line-height:16px;font-size:12.2px;letter-spacing:0.16px;color:#000">PIC 18 pin</span>
<svg style="position:absolute;left:39px;top:697px;overflow:visible" width="17" height="16" viewBox="0 0 17 16"><rect x="5" y="1" width="8.500" height="14.500" rx="1" fill="#fafafa" stroke="#4a4a4a"/><path d="M2 3.500H5M2 6.500H5M2 9.500H5M2 12.500H5M13.500 3.500H16.500M13.500 6.500H16.500M13.500 9.500H16.500M13.500 12.500H16.500" stroke="#4a4a4a"/></svg>
</div>
<div style="left:30px;top:105px;width:225px;height:24px;border-top:1px solid #8e8e8e;background:linear-gradient(#f6f8fb,#e0e4ee);border-right:1px solid #a8a8b0;border-bottom:1px solid #a8a8b0;box-shadow:0 1px 1px #ccc"><span style="left:5px;top:4px;line-height:16px;font-size:12.2px;letter-spacing:0.45px">Component</span></div>
<div style="left:255px;top:105px;width:17px;height:716px;background:#fbfbfd"></div>
<div style="left:255px;top:106px;width:16px;height:16px;border:1px solid #b0b0b8;background:linear-gradient(#fafbfd,#e4e7f0)"><svg style="position:absolute;left:3px;top:4px" width="9" height="6"><path d="M0.5 5L4.5 1L8.5 5Z" fill="#000"/></svg></div>
<div style="left:255px;top:254px;width:16px;height:534px;border:1px solid #9a9aa4;background:linear-gradient(90deg,#dfe3f2,#f8f9fd 70%,#eceef6)"></div>
<div style="left:258px;top:510px;width:10px;height:20px;background-image:radial-gradient(circle,#c4c8d8 0.8px,transparent 1.1px);background-size:4px 4px"></div>
<div style="left:255px;top:788px;width:16px;height:16px;border:1px solid #b0b0b8;border-radius:2px;background:linear-gradient(#fafbfd,#e4e7f0)"><svg style="position:absolute;left:3px;top:4.500px" width="9" height="6"><path d="M1 5L4.500 1.200L8 5Z" fill="#000"/></svg></div>
<div style="left:255px;top:804px;width:16px;height:15px;border:1px solid #b0b0b8;border-radius:2px;background:linear-gradient(#fafbfd,#e4e7f0)"><svg style="position:absolute;left:3px;top:4.500px" width="9" height="6"><path d="M1 0.800L4.500 4.600L8 0.800Z" fill="#000"/></svg></div>
<div style="left:276px;top:92px;width:821px;height:699px;border:1px solid #6e6e6e;border-right-color:#9a9a9a;border-bottom-color:#5a5a5a;box-shadow:inset -1px -1px 0 #c4c4c4"></div>
<div style="left:1094px;top:93px;width:1px;height:697px;background:#9a9a9a"></div><div style="left:277px;top:788px;width:818px;height:1px;background:#777"></div>
<div style="left:279px;top:95px;width:814px;height:692px;border:1px solid #9c9c9c;border-right-color:#555;border-bottom-color:#2a2a2a;background:#fdfdfd"></div>
<svg style="position:absolute;left:0;top:0" width="1129" height="849" viewBox="0 0 1129 849" font-family="DejaVu Sans,Liberation Sans,sans-serif">
<g transform="translate(0.5,0.5)" fill="none" stroke="#000" stroke-width="1" shape-rendering="crispEdges">
<path d="M316 140L453 140L453 188"/>
<path d="M333 140L333 164L349 164"/>
<path d="M380 164L381 164"/>
<path d="M381 164L413 164L413 196L429 196"/>
<path d="M397 164L397 188L333 188L333 212L349 212"/>
<path d="M380 212L381 212"/>
<path d="M381 212L429 212"/>
<path d="M413 212L413 284L429 284"/>
<path d="M413 228L429 228"/>
<path d="M445 284L469 284"/>
<path d="M453 172L469 172L469 188"/>
<path d="M453 236L453 260L469 260L469 300"/>
<path d="M469 236L469 244"/>
<path d="M477 212L525 212"/>
<path d="M509 212L509 436L565 436"/>
<path d="M525 212L525 196L541 196"/>
<path d="M572 196L573 196"/>
<path d="M573 196L621 196"/>
<path d="M637 196L669 196L669 172L652 172"/>
<path d="M525 212L525 228L538 228"/>
<path d="M569 228L570 228"/>
<path d="M570 228L621 228"/>
<path d="M637 228L669 228L669 244"/>
<path d="M549 316L757 316L757 364L741 364"/>
<path d="M549 316L549 425L551 427L551 429L549 431L549 433L551 435L551 437L549 439L549 449L551 451L551 453L549 455L549 465L551 467L551 469L549 471L549 548L605 548L605 588L629 588"/>
<path d="M629 420L629 340L699 340"/>
<path d="M645 436L645 423L647 421L647 419L645 417L645 356L701 356"/>
<path d="M661 452L661 439L663 437L663 435L661 433L661 423L663 421L663 419L661 417L661 372L701 372"/>
<path d="M677 468L677 455L679 453L679 451L677 449L677 439L679 437L679 435L677 433L677 423L679 421L679 419L677 417L677 388L699 388"/>
<path d="M468 428L557 428L557 420L565 420"/>
<path d="M565 452L509 452L509 540"/>
<path d="M565 468L525 468L525 553L527 555L527 557L525 559L525 620L629 620"/>
<path d="M613 420L741 420"/>
<path d="M613 436L741 436"/>
<path d="M613 452L741 452"/>
<path d="M613 468L741 468"/>
<path d="M668 508L725 508L725 500L741 500"/>
<path d="M733 500L733 484L741 484"/>
<path d="M733 516L741 516"/>
<path d="M789 420L829 420"/>
<path d="M860 420L861 420"/>
<path d="M789 436L829 436"/>
<path d="M860 436L861 436"/>
<path d="M789 452L829 452"/>
<path d="M860 452L861 452"/>
<path d="M789 468L829 468"/>
<path d="M860 468L861 468"/>
<path d="M789 484L829 484"/>
<path d="M860 484L861 484"/>
<path d="M789 500L829 500"/>
<path d="M860 500L861 500"/>
<path d="M789 516L829 516"/>
<path d="M860 516L861 516"/>
<path d="M861 420L1013 420L1013 465L1015 467L1015 469L1013 471L1013 500L981 500"/>
<path d="M861 436L997 436L997 465L999 467L999 469L997 471L997 484L981 484"/>
<path d="M861 452L901 452L901 439L903 437L903 435L901 433L901 423L903 421L903 419L901 417L901 404L1029 404L1029 468L981 468"/>
<path d="M861 468L917 468"/>
<path d="M861 484L917 484"/>
<path d="M861 500L917 500"/>
<path d="M861 516L917 516"/>
<path d="M981 516L1045 516L1045 660L997 660L997 668"/>
<path d="M452 540L509 540"/>
<path d="M469 540L469 564L461 564L461 596L477 596"/>
<path d="M469 556L541 556L541 604L629 604"/>
<path d="M613 604L613 591L615 589L615 587L613 585L613 572L629 572"/>
<path d="M509 596L533 596L533 617L535 619L535 621L533 623L533 660"/>
<path d="M533 691L533 732"/>
<path d="M677 572L741 572"/>
<path d="M677 588L741 588"/>
<path d="M677 604L741 604"/>
<path d="M677 620L741 620"/>
<path d="M668 692L693 692L693 636L741 636"/>
<path d="M733 636L733 652L741 652"/>
<path d="M733 668L741 668"/>
<path d="M789 572L829 572"/>
<path d="M860 572L861 572"/>
<path d="M789 588L829 588"/>
<path d="M860 588L861 588"/>
<path d="M789 604L829 604"/>
<path d="M860 604L861 604"/>
<path d="M789 620L829 620"/>
<path d="M860 620L861 620"/>
<path d="M789 636L829 636"/>
<path d="M860 636L861 636"/>
<path d="M789 652L829 652"/>
<path d="M860 652L861 652"/>
<path d="M789 668L829 668"/>
<path d="M860 668L861 668"/>
<path d="M861 572L1013 572L1013 617L1015 619L1015 621L1013 623L1013 652L981 652"/>
<path d="M861 588L997 588L997 617L999 619L999 621L997 623L997 636L981 636"/>
<path d="M861 604L901 604L901 591L903 589L903 587L901 585L901 575L903 573L903 571L901 569L901 556L1029 556L1029 620L981 620"/>
<path d="M861 620L917 620"/>
<path d="M861 636L917 636"/>
<path d="M861 652L917 652"/>
<path d="M861 668L917 668"/>
<path d="M981 668L1029 668L1029 716"/>
<rect x="349" y="158" width="31" height="11" fill="#fff"/>
<rect x="349" y="206" width="31" height="11" fill="#fff"/>
<rect x="429" y="188" width="48" height="48" fill="#fff"/>
<rect x="541" y="190" width="31" height="11" fill="#fff"/>
<rect x="538" y="222" width="31" height="11" fill="#fff"/>
<rect x="565" y="404" width="48" height="80" fill="#fff"/>
<rect x="741" y="404" width="48" height="128" fill="#fff"/>
<rect x="829" y="414" width="31" height="11" fill="#fff"/>
<rect x="829" y="430" width="31" height="11" fill="#fff"/>
<rect x="829" y="446" width="31" height="11" fill="#fff"/>
<rect x="829" y="462" width="31" height="11" fill="#fff"/>
<rect x="829" y="478" width="31" height="11" fill="#fff"/>
<rect x="829" y="494" width="31" height="11" fill="#fff"/>
<rect x="829" y="510" width="31" height="11" fill="#fff"/>
<rect x="917" y="452" width="64" height="80" fill="#fff"/>
<rect x="528" y="660" width="11" height="31" fill="#fff"/>
<rect x="629" y="556" width="48" height="80" fill="#fff"/>
<rect x="741" y="556" width="48" height="128" fill="#fff"/>
<rect x="829" y="566" width="31" height="11" fill="#fff"/>
<rect x="829" y="582" width="31" height="11" fill="#fff"/>
<rect x="829" y="598" width="31" height="11" fill="#fff"/>
<rect x="829" y="614" width="31" height="11" fill="#fff"/>
<rect x="829" y="630" width="31" height="11" fill="#fff"/>
<rect x="829" y="646" width="31" height="11" fill="#fff"/>
<rect x="829" y="662" width="31" height="11" fill="#fff"/>
<rect x="917" y="604" width="64" height="80" fill="#fff"/>
</g>
<g stroke="#000" stroke-width="2" shape-rendering="crispEdges">
<path d="M461 301H477M464 306H474M467 311H471"/>
<path d="M661 245H677M664 250H674M667 255H671"/>
<path d="M525 733H541M528 738H538M531 743H535"/>
<path d="M1021 717H1037M1024 722H1034M1027 727H1031"/>
<path d="M429 276V292M445 276V292"/>
</g>
<g fill="#000">
<rect x="332" y="139" width="3" height="3"/>
<rect x="396" y="163" width="3" height="3"/>
<rect x="412" y="211" width="3" height="3"/>
<rect x="412" y="227" width="3" height="3"/>
<rect x="468" y="283" width="3" height="3"/>
<rect x="452" y="171" width="3" height="3"/>
<rect x="508" y="211" width="3" height="3"/>
<rect x="524" y="211" width="3" height="3"/>
<rect x="628" y="419" width="3" height="3"/>
<rect x="644" y="435" width="3" height="3"/>
<rect x="660" y="451" width="3" height="3"/>
<rect x="676" y="467" width="3" height="3"/>
<rect x="732" y="499" width="3" height="3"/>
<rect x="468" y="539" width="3" height="3"/>
<rect x="468" y="555" width="3" height="3"/>
<rect x="612" y="603" width="3" height="3"/>
<rect x="524" y="595" width="3" height="3"/>
<rect x="732" y="635" width="3" height="3"/>
<rect x="996" y="667" width="3" height="3"/>
</g>
<g fill="#fff" stroke="#000" stroke-width="1">
<circle cx="309" cy="140.1" r="3.4"/>
<circle cx="645" cy="172.1" r="3.4"/>
<circle cx="461" cy="428.1" r="3.4"/>
<circle cx="661" cy="508.1" r="3.4"/>
<circle cx="445" cy="540.1" r="3.4"/>
<circle cx="661" cy="692.1" r="3.4"/>
</g>
<g font-size="11.6" fill="#000" text-anchor="middle" letter-spacing="0.45">
<text x="308.5" y="130.5">9V</text>
<text x="364.5" y="154.5">10kΩ</text>
<text x="364.5" y="202.5">20kΩ</text>
<text x="436.0" y="199.5">7</text>
<text x="452.5" y="199.5">8</text>
<text x="468.5" y="199.5">4</text>
<text x="436.0" y="215.5">6</text>
<text x="468.5" y="215.5">3</text>
<text x="436.0" y="231.5">2</text>
<text x="452.5" y="231.5">1</text>
<text x="468.5" y="231.5">5</text>
<text x="556.5" y="186.5">400Ω</text>
<text x="644.5" y="162.5">9V</text>
<text x="553.5" y="218.5">400Ω</text>
<text x="436.5" y="272.2">50µF</text>
<text x="576.5" y="423.5">en</text>
<text x="600.0" y="423.5">A</text>
<text x="576.5" y="439.5">&gt;</text>
<text x="600.0" y="439.5">B</text>
<text x="576.5" y="455.5">u/d</text>
<text x="600.0" y="455.5">C</text>
<text x="576.5" y="471.5">r</text>
<text x="600.0" y="471.5">D</text>
<text x="460.5" y="418.5">9V</text>
<text x="752.5" y="423.5">A</text>
<text x="776.5" y="423.5">c</text>
<text x="752.5" y="439.5">B</text>
<text x="776.5" y="439.5">b</text>
<text x="752.5" y="455.5">C</text>
<text x="776.5" y="455.5">a</text>
<text x="752.5" y="471.5">D</text>
<text x="776.5" y="471.5">f</text>
<text x="752.5" y="487.5">lt</text>
<text x="776.5" y="487.5">g</text>
<text x="752.5" y="503.5">rb</text>
<text x="776.5" y="503.5">e</text>
<text x="752.5" y="519.5">en</text>
<text x="776.5" y="519.5">d</text>
<text x="660.5" y="498.5">9V</text>
<text x="844.5" y="410.5">300Ω</text>
<text x="844.5" y="426.5">300Ω</text>
<text x="844.5" y="442.5">300Ω</text>
<text x="844.5" y="458.5">300Ω</text>
<text x="844.5" y="474.5">300Ω</text>
<text x="844.5" y="490.5">300Ω</text>
<text x="844.5" y="506.5">300Ω</text>
<text x="932.5" y="471.5">f</text>
<text x="964.5" y="471.5">a</text>
<text x="932.5" y="487.5">g</text>
<text x="964.5" y="487.5">b</text>
<text x="932.5" y="503.5">e</text>
<text x="964.5" y="503.5">c</text>
<text x="932.5" y="519.5">d</text>
<text x="965.5" y="519.5">-v</text>
<text x="444.5" y="530.5">9V</text>
<text x="640.5" y="575.5">en</text>
<text x="664.0" y="575.5">A</text>
<text x="640.5" y="591.5">&gt;</text>
<text x="664.0" y="591.5">B</text>
<text x="640.5" y="607.5">u/d</text>
<text x="664.0" y="607.5">C</text>
<text x="640.5" y="623.5">r</text>
<text x="664.0" y="623.5">D</text>
<text x="752.5" y="575.5">A</text>
<text x="776.5" y="575.5">c</text>
<text x="752.5" y="591.5">B</text>
<text x="776.5" y="591.5">b</text>
<text x="752.5" y="607.5">C</text>
<text x="776.5" y="607.5">a</text>
<text x="752.5" y="623.5">D</text>
<text x="776.5" y="623.5">f</text>
<text x="752.5" y="639.5">lt</text>
<text x="776.5" y="639.5">g</text>
<text x="752.5" y="655.5">rb</text>
<text x="776.5" y="655.5">e</text>
<text x="752.5" y="671.5">en</text>
<text x="776.5" y="671.5">d</text>
<text x="660.5" y="682.5">9V</text>
<text x="844.5" y="562.5">300Ω</text>
<text x="844.5" y="578.5">300Ω</text>
<text x="844.5" y="594.5">300Ω</text>
<text x="844.5" y="610.5">300Ω</text>
<text x="844.5" y="626.5">300Ω</text>
<text x="844.5" y="642.5">300Ω</text>
<text x="844.5" y="658.5">300Ω</text>
<text x="932.5" y="623.5">f</text>
<text x="964.5" y="623.5">a</text>
<text x="932.5" y="639.5">g</text>
<text x="964.5" y="639.5">b</text>
<text x="932.5" y="655.5">e</text>
<text x="964.5" y="655.5">c</text>
<text x="932.5" y="671.5">d</text>
<text x="965.5" y="671.5">-v</text>
<text transform="translate(543.5,676.5) rotate(90)" x="0" y="0">10kΩ</text>
</g>
<g stroke="#000" stroke-width="1" fill="none">
<path d="M621.5 188.5V204.5" shape-rendering="crispEdges"/>
<path d="M622.5 196.5L637.5 188.5V204.5Z" fill="#dc1826" stroke="#94101a"/>
<path d="M622.5 203.5L617.5 208.5M617.5 205.5V208.5H620.5" />
<path d="M637.5 220.5V236.5" shape-rendering="crispEdges"/>
<path d="M621.5 220.5V236.5L636.5 228.5Z" fill="#fff"/>
<path d="M637.5 221.5L642.5 216.5M639.5 216.5H642.5V219.5"/>
<path d="M693.5 332.5C712 334 728 346 734.5 364.5C728 383 712 395 693.5 396.5C702.5 376 702.5 353 693.5 332.5Z" fill="#fff"/>
<circle cx="738" cy="364.5" r="2.8" fill="#fff"/>
<path d="M476.5 591.5H509.5M493.5 585.5V591.5M484.5 585.5H501.5" shape-rendering="crispEdges"/>
<circle cx="479.5" cy="596.5" r="1.6" fill="#fff"/><circle cx="507.5" cy="596.5" r="1.6" fill="#fff"/>
</g>
<defs><linearGradient id="btng" x1="0" y1="0" x2="0" y2="1"><stop offset="0" stop-color="#f4f6fb"/><stop offset="1" stop-color="#dfe4ef"/></linearGradient></defs>
<rect x="477.5" y="604.5" width="31" height="15" rx="2.5" fill="url(#btng)" stroke="#9a9ca4"/>
<g stroke="#8c8c8c" stroke-width="1" shape-rendering="crispEdges">
<path d="M942 476.5H959M939.5 478V491M942 492.5H959M939.5 494V506"/>
<path d="M942 628.5H959M939.5 630V642M939.5 646V658M942 659.5H959"/>
</g>
<path d="M1086.5 787.5L1092.5 781.5V787.5Z" fill="#222"/>
</svg>
<div style="left:276px;top:791px;width:1px;height:31px;background:#5a5a5a"></div><div style="left:273px;top:821px;width:4px;height:1px;background:#5a5a5a"></div>
<div style="left:276px;top:794px;width:821px;height:1px;background:#4a4a4a"></div>
<div style="left:1096px;top:794px;width:1px;height:4px;background:#4a4a4a"></div>
<div class="btab" style="left:278px;width:73px"><svg style="position:absolute;left:2px;top:4px" width="18" height="18" viewBox="0 0 18 18"><rect x="1.5" y="1.5" width="14" height="12" fill="#f8fafc" stroke="#a8b0c0"/><rect x="1.5" y="1.5" width="14" height="2.5" fill="#8ab0e4" stroke="#7a98c8"/><circle cx="9.500" cy="11.500" r="3.300" fill="#eaf6e4" stroke="#8cc878" stroke-width="1.400"/><path d="M11.500 6.500L14.500 9L10.500 10Z" fill="#8cc878"/></svg><span style="left:22.5px">Gpasm</span></div>
<div class="btab" style="left:353px;width:69px"><svg style="position:absolute;left:2px;top:4px" width="18" height="18" viewBox="0 0 18 18"><path d="M1 10L9 3L17 9L9 16Z" fill="#c8c8c8" stroke="#888"/><path d="M4 10L9 6L12 9L7 13Z" fill="#e8b030" stroke="#a07010"/><path d="M2 12L5 15M4 10.5L7 14" stroke="#555"/></svg><span style="left:22.5px">Gpsim</span></div>
<div class="btab" style="left:424px;width:100px"><svg style="position:absolute;left:2px;top:4px" width="18" height="18" viewBox="0 0 18 18"><rect x="2.5" y="4.5" width="12" height="10" fill="#3a78d8" stroke="#2450a0"/><path d="M3 7.5H15M3 10.5H15" stroke="#a8c8f4"/></svg><span style="left:22.5px">MicroBASIC</span></div>
<div class="vtab" style="left:1100px;top:93px;width:25px;height:56px;border-left-color:#6a6a70;background:linear-gradient(90deg,#e8ebf3,#f8f9fc)"></div>
<div class="vtxt" style="left:1121px;top:115px;transform:rotate(90deg)">Item</div>
<div class="vtab" style="left:1100px;top:150px;width:25px;height:109px;border-left-color:#6a6a70;background:linear-gradient(90deg,#e8ebf3,#f8f9fc)"></div>
<div class="vtxt" style="left:1121px;top:174px;transform:rotate(90deg)">Context Help</div>
<svg style="position:absolute;left:1104px;top:96px" width="18" height="18" viewBox="0 0 18 18"><ellipse cx="9" cy="9" rx="6.300" ry="4" transform="rotate(45 9 9)" fill="#e4e6f8" stroke="#7a7ab0" stroke-width="0.9"/><path d="M2 2.500L5 5.500M12.500 12.500L16 16" stroke="#4a4a8a" stroke-width="1.6"/></svg>
<svg style="position:absolute;left:1104px;top:153px" width="18" height="18" viewBox="0 0 18 18"><path d="M2 4L9 6L16 3L15 13L9 16L3 14Z" fill="#c8d8f6" stroke="#6a88d0"/><path d="M9 6V16" stroke="#8aa4e0"/><path d="M10 7L15 5L14.500 12L10 14.500Z" fill="#eef3fc"/></svg>
<div style="left:1100px;top:259px;width:2px;height:563px;background:#000"></div>
<div style="left:1096px;top:821px;width:6px;height:1px;background:#555"></div>
<div style="left:11px;top:826px;font-size:12.2px;letter-spacing:0.3px;line-height:16px">Ready</div>
<div style="left:4px;top:366px;width:1px;height:456px;background:#000"></div>
<div id="bl"></div><div id="br"></div><div id="br2"></div><div id="bl2"></div><div id="bb"></div>
</body></html>
